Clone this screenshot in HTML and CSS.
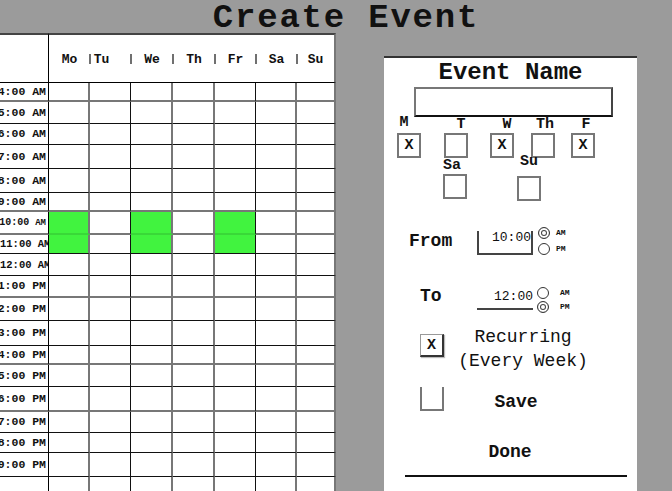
FILE: index.html
```html
<!DOCTYPE html>
<html lang="en">
<head>
    <meta charset="UTF-8">
    <title>Create Event</title>
    <link rel="stylesheet" href="styles.css">
</head>
<body>

    <h1 class="title">Create Event</h1>

    <main class="board">
        <table class="week">
            <colgroup>
                <col class="c-time">
                <col class="c-41"><col class="c-41"><col class="c-42"><col class="c-42">
                <col class="c-41"><col class="c-41"><col class="c-39">
            </colgroup>
            <thead>
                <tr>
                    <th class="corner"></th>
                    <th colspan="7" class="head">
                        <div class="day-names">
                            <span class="dn w41">Mo</span><span class="pipe">|</span>
                            <span class="dn w41 tu">Tu</span><span class="pipe">|</span>
                            <span class="dn w42">We</span><span class="pipe">|</span>
                            <span class="dn w42">Th</span><span class="pipe">|</span>
                            <span class="dn w41">Fr</span><span class="pipe">|</span>
                            <span class="dn w41">Sa</span><span class="pipe">|</span>
                            <span class="dn w37">Su</span>
                        </div>
                    </th>
                </tr>
            </thead>
            <tbody>
                <tr class="h19 soft"><th><div class="hr">4:00 AM</div></th><td></td><td></td><td></td><td></td><td></td><td></td><td></td></tr>
                <tr><th><div class="hr">5:00 AM</div></th><td></td><td></td><td></td><td></td><td></td><td></td><td></td></tr>
                <tr class="h21"><th><div class="hr">6:00 AM</div></th><td></td><td></td><td></td><td></td><td></td><td></td><td></td></tr>
                <tr class="h24"><th><div class="hr">7:00 AM</div></th><td></td><td></td><td></td><td></td><td></td><td></td><td></td></tr>
                <tr class="h24"><th><div class="hr">8:00 AM</div></th><td></td><td></td><td></td><td></td><td></td><td></td><td></td></tr>
                <tr class="h19 soft"><th><div class="hr">9:00 AM</div></th><td></td><td></td><td></td><td></td><td></td><td></td><td></td></tr>
                <tr class="h23 soft"><th><div class="hr small">10:00 <small>AM</small></div></th><td class="on"></td><td></td><td class="on"></td><td></td><td class="on"></td><td></td><td></td></tr>
                <tr class="h19"><th><div class="hr clip">11:00 AM</div></th><td class="on"></td><td></td><td class="on"></td><td></td><td class="on"></td><td></td><td></td></tr>
                <tr><th><div class="hr clip">12:00 AM</div></th><td></td><td></td><td></td><td></td><td></td><td></td><td></td></tr>
                <tr class="soft"><th><div class="hr">1:00 PM</div></th><td></td><td></td><td></td><td></td><td></td><td></td><td></td></tr>
                <tr class="h23"><th><div class="hr">2:00 PM</div></th><td></td><td></td><td></td><td></td><td></td><td></td><td></td></tr>
                <tr class="h25"><th><div class="hr">3:00 PM</div></th><td></td><td></td><td></td><td></td><td></td><td></td><td></td></tr>
                <tr class="h19 soft"><th><div class="hr">4:00 PM</div></th><td></td><td></td><td></td><td></td><td></td><td></td><td></td></tr>
                <tr><th><div class="hr">5:00 PM</div></th><td></td><td></td><td></td><td></td><td></td><td></td><td></td></tr>
                <tr class="h25 soft"><th><div class="hr">6:00 PM</div></th><td></td><td></td><td></td><td></td><td></td><td></td><td></td></tr>
                <tr class="h21"><th><div class="hr">7:00 PM</div></th><td></td><td></td><td></td><td></td><td></td><td></td><td></td></tr>
                <tr class="h20"><th><div class="hr">8:00 PM</div></th><td></td><td></td><td></td><td></td><td></td><td></td><td></td></tr>
                <tr class="h24"><th><div class="hr">9:00 PM</div></th><td></td><td></td><td></td><td></td><td></td><td></td><td></td></tr>
                <tr><th><div class="hr"></div></th><td></td><td></td><td></td><td></td><td></td><td></td><td></td></tr>
            </tbody>
        </table>

        <section class="panel">
            <h2 class="panel-title">Event Name</h2>
            <div class="name-input"></div>

            <div class="days">
                <div class="day"><span class="day-l l-m">M</span><span class="box">X</span></div>
                <div class="day g23"><span class="day-l l-r10">T</span><span class="box"></span></div>
                <div class="day g22"><span class="day-l l-r10">W</span><span class="box">X</span></div>
                <div class="day g17"><span class="day-l l-r4">Th</span><span class="box"></span></div>
                <div class="day g16"><span class="day-l l-r6">F</span><span class="box">X</span></div>
            </div>
            <div class="days weekend">
                <div class="day"><span class="day-l l-sa">Sa</span><span class="box"></span></div>
                <div class="day g50"><span class="day-l l-su">Su</span><span class="box"></span></div>
            </div>

            <div class="time-row from">
                <span class="time-label">From</span>
                <span class="clock">10:00</span>
                <div class="ampm">
                    <label class="opt"><span class="radio on"></span>AM</label>
                    <label class="opt"><span class="radio"></span>PM</label>
                </div>
            </div>

            <div class="time-row to">
                <span class="time-label">To</span>
                <span class="clock line">12:00</span>
                <div class="ampm">
                    <label class="opt"><span class="radio"></span>AM</label>
                    <label class="opt"><span class="radio on"></span>PM</label>
                </div>
            </div>

            <div class="check-row recurring">
                <span class="box raised">X</span>
                <span class="rec">Recurring<br>(Every Week)</span>
            </div>

            <div class="check-row save">
                <span class="box open"></span>
                <span class="save-text">Save</span>
            </div>

            <div class="done">Done</div>
        </section>
    </main>

</body>
</html>
```

FILE: styles.css
```css
* {
    box-sizing: border-box;
}
body {
    margin: 0;
    height: 491px;
    overflow: hidden;
    background-color: #9b9b9b;
    font-family: "Liberation Mono", "Courier New", monospace;
    color: #111;
}
.title {
    margin: 0;
    height: 33px;
    padding: 4px 0 0 20px;
    font-size: 34px;
    line-height: 29px;
    letter-spacing: 1.8px;
    text-align: center;
}
.board {
    display: flex;
    align-items: flex-start;
}

/* week grid */
.week {
    margin-left: -4px;
    width: 340px;
    table-layout: fixed;
    border-collapse: separate;
    border-spacing: 0;
    background-color: #fff;
}
.c-time { width: 53px; }
.c-41 { width: 41px; }
.c-42 { width: 42px; }
.c-39 { width: 39px; }
.week th,
.week td {
    padding: 0;
    border-bottom: 1px solid #111;
}
.week thead tr {
    height: 50px;
}
.week thead th {
    border-top: 2px solid #444;
    border-bottom: 1px solid #000;
}
.week .corner,
.week tbody th {
    border-right: 1px solid #000;
}
.week .head {
    border-right: 2px solid #777;
}
.day-names {
    display: flex;
    align-items: center;
    padding-top: 2px;
    font-size: 13px;
    font-weight: bold;
}
.dn {
    text-align: center;
}
.dn.tu {
    padding-right: 18px;
}
.w41 { width: 41px; }
.w42 { width: 42px; }
.w37 { width: 37px; }
.pipe {
    width: 0;
    display: flex;
    justify-content: center;
    font-size: 10px;
    font-weight: bold;
    color: #222;
    will-change: transform;
}
.week tr { height: 22px; }
.week tr.h19 { height: 19px; }
.week tr.h20 { height: 20px; }
.week tr.h21 { height: 21px; }
.week tr.h23 { height: 23px; }
.week tr.h24 { height: 24px; }
.week tr.h25 { height: 25px; }
.week tr.soft > * {
    border-bottom: 2px solid #777;
}
.week td:nth-child(2),
.week td:nth-child(4),
.week td:nth-child(5),
.week td:nth-child(7),
.week td:nth-child(8) {
    border-right: 2px solid #777;
}
.week td:nth-child(3),
.week td:nth-child(6) {
    border-right: 1px solid #111;
}
.week td.on {
    background-color: #41f33f;
}
.week tr.soft td.on {
    border-bottom-color: #39d838;
}
.hr {
    overflow: hidden;
    white-space: nowrap;
    text-align: right;
    padding-right: 2px;
    font-size: 11.5px;
    font-weight: bold;
    line-height: 14px;
}
.hr.small {
    font-size: 10px;
}
.hr.small small {
    font-size: 9px;
}
.hr.clip {
    text-align: left;
    padding-left: 4px;
    font-size: 10.5px;
}

/* event panel */
.panel {
    width: 253px;
    height: 440px;
    margin: 23px 0 0 48px;
    background-color: #fff;
    border-top: 2px solid #333;
    display: flex;
    flex-direction: column;
}
.panel-title {
    margin: 0;
    font-size: 24px;
    line-height: 29px;
    text-align: center;
}
.name-input {
    width: 199px;
    height: 30px;
    margin-left: 30px;
    border: 2px solid;
    border-color: #777 #444 #111 #777;
}
.days {
    display: flex;
    padding-left: 13px;
}
.days.weekend {
    padding-left: 59px;
}
.day {
    display: flex;
    flex-direction: column;
    align-items: center;
    width: 24px;
}
.g16 { margin-left: 16px; }
.g17 { margin-left: 17px; }
.g22 { margin-left: 22px; }
.g23 { margin-left: 23px; }
.g50 { margin-left: 50px; }
.day-l {
    height: 16px;
    font-size: 15px;
    font-weight: bold;
    line-height: 16px;
}
.l-m { margin: -2px 10px 2px 0; }
.l-r10 { margin-left: 10px; }
.l-r6 { margin-left: 6px; }
.l-r4 { margin-left: 4px; }
.l-sa { margin-right: 6px; }
.l-su { margin: -4px 0 6px; }
.box {
    width: 24px;
    height: 25px;
    border: 2px solid #777;
    display: flex;
    align-items: center;
    justify-content: center;
    font-size: 15px;
    font-weight: bold;
}

.time-row {
    display: flex;
    align-items: flex-end;
}
.time-row.from {
    margin-top: 26px;
}
.time-row.to {
    margin-top: 32px;
}
.time-label {
    align-self: flex-start;
    width: 93px;
    font-size: 18px;
    font-weight: bold;
    line-height: 28px;
}
.from .time-label {
    padding-left: 25px;
}
.to .time-label {
    padding-left: 36px;
    line-height: 18px;
}
.clock {
    width: 56px;
    height: 24px;
    border: 2px solid #444;
    border-top: 0;
    text-align: right;
    font-size: 13px;
    line-height: 13px;
}
.clock.line {
    align-self: flex-start;
    height: 23px;
    padding-top: 3px;
    border-left: 0;
    border-right: 0;
}
.ampm {
    display: flex;
    flex-direction: column;
    gap: 4px;
    margin-left: 5px;
}
.to .ampm {
    gap: 2px;
    margin-left: 4px;
}
.opt {
    display: flex;
    align-items: center;
    gap: 6px;
    font-size: 8px;
    font-weight: bold;
    line-height: 12px;
}
.to .opt {
    gap: 11px;
}
.radio {
    width: 12px;
    height: 12px;
    border: 1px solid #333;
    border-radius: 50%;
}
.radio.on {
    box-shadow: inset 0 0 0 2px #fff, inset 0 0 0 3px #444;
}

.check-row {
    display: flex;
    padding-left: 36px;
}
.recurring {
    margin-top: 12px;
}
.box.raised {
    height: 23px;
    margin-top: 9px;
    border-width: 1px 2px 2px 1px;
    border-color: #999 #333 #333 #999;
    box-shadow: 1px 1px 1px #bbb;
}
.rec {
    margin-left: 14px;
    width: 130px;
    text-align: center;
    font-size: 18px;
    line-height: 24px;
}
.save {
    margin-top: 14px;
}
.box.open {
    height: 24px;
    border-top: 0;
}
.save-text {
    margin: 3px 0 0 14px;
    width: 116px;
    text-align: center;
    font-size: 18px;
    font-weight: bold;
    line-height: 24px;
}
.done {
    margin: 26px 0 0 21px;
    width: 222px;
    padding: 0 12px 11px 0;
    border-bottom: 2px solid #111;
    text-align: center;
    font-size: 18px;
    font-weight: bold;
    line-height: 24px;
}
```
